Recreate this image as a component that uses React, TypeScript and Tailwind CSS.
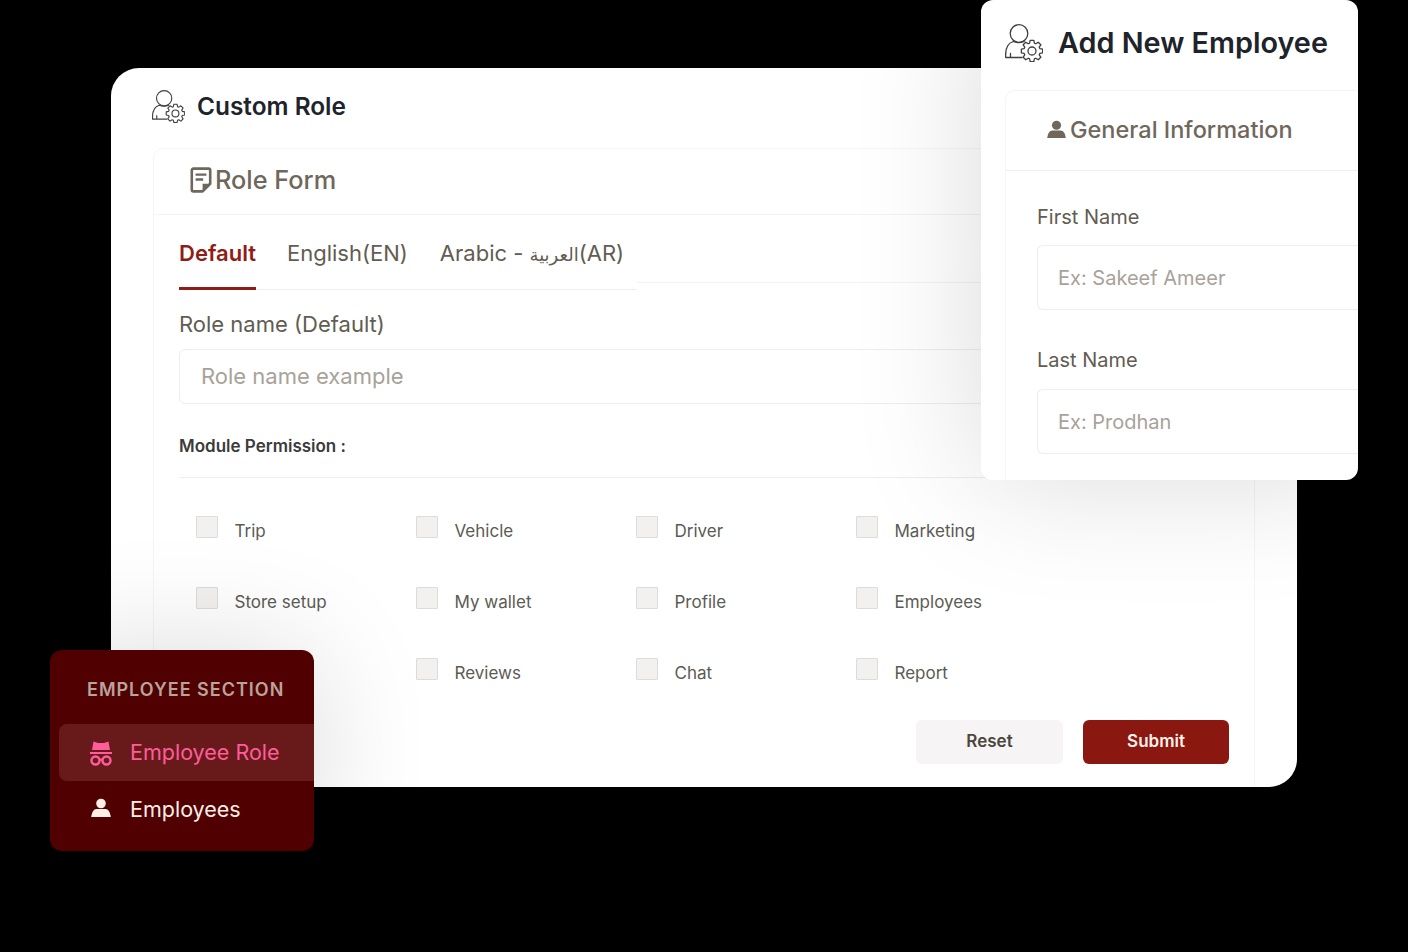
const gearPath = (() => {
  const pts: string[] = [];
  for (let i = 0; i < 8; i++) {
    const a = (i * Math.PI) / 4;
    [
      [8.2, -0.3],
      [10.8, -0.17],
      [10.8, 0.17],
      [8.2, 0.3],
    ].forEach(([r, d]) => {
      pts.push(`${(27 + r * Math.cos(a + d)).toFixed(2)} ${(27 + r * Math.sin(a + d)).toFixed(2)}`);
    });
  }
  return `M${pts.join("L")}Z`;
})();

const UserGearIcon = ({ className }: { className: string }) => (
  <svg viewBox="0 0 38 38" fill="none" stroke="#3f3f3f" strokeWidth="1.3" className={className}>
    <circle cx="14" cy="9.500" r="8.800" />
    <path d="M5.500 33.500v-4M.7 33.500c-.6-9 2.500-14.500 7.500-16 3.500 1.500 7.500 1.500 11 0M.7 33.500H17" strokeLinecap="round" />
    <path d={gearPath} strokeLinejoin="round" />
    <circle cx="27" cy="27" r="4" />
  </svg>
);

const NoteIcon = () => (
  <svg viewBox="0 0 20 24" className="h-[26px] w-[22px]" fill="none">
    <path
      d="M3 1.500h14a1.500 1.500 0 0 1 1.500 1.500v12.500l-7 7H3A1.500 1.500 0 0 1 1.500 21V3A1.500 1.500 0 0 1 3 1.500z"
      stroke="#6f675c"
      strokeWidth="2.400"
      strokeLinejoin="round"
    />
    <path d="M5 7h10M5 11.500h7" stroke="#6f675c" strokeWidth="2.200" />
    <path d="M11.500 22.500v-7h7z" fill="#6f675c" />
  </svg>
);

const PersonIcon = ({ className }: { className: string }) => (
  <svg viewBox="0 0 20 20" fill="currentColor" className={className}>
    <circle cx="10" cy="5.500" r="4.800" />
    <path d="M5.500 11h9c2.800 0 4.600 3 5.300 8H.2c.7-5 2.500-8 5.300-8z" />
  </svg>
);

const SpyIcon = () => (
  <svg viewBox="0 0 24 26" className="h-[26px] w-[24px] text-[#ff5c9a]" fill="none" stroke="currentColor">
    <path d="M4.500 1.500 9 3h6l4.500-1.500L21 10H3z" fill="currentColor" stroke="none" />
    <path d="M1 13h22" strokeWidth="2.200" />
    <circle cx="6.500" cy="20.500" r="4" strokeWidth="2.400" />
    <circle cx="17.500" cy="20.500" r="4" strokeWidth="2.400" />
    <path d="M10.500 20c1-.7 2-.7 3 0" strokeWidth="2" />
  </svg>
);

const modules = [
  "Trip",
  "Vehicle",
  "Driver",
  "Marketing",
  "Store setup",
  "My wallet",
  "Profile",
  "Employees",
  "",
  "Reviews",
  "Chat",
  "Report",
];

const ModuleCheck = ({ label }: { label: string }) => (
  <div className="flex h-[71px] items-start gap-[16.500px] text-[17px] leading-[30px] text-[#5b5b55]">
    <div className="h-[22px] w-[22px] shrink-0 rounded-[1px] border border-[#dcdcdc] bg-[#f3f1ef]" />
    <span>{label}</span>
  </div>
);

const RoleCard = () => (
  <div className="ml-[111px] flex h-[719px] w-[1186px] flex-col rounded-[28px] bg-white pl-[41px] pr-[42px]">
    <div className="flex h-[80px] shrink-0 items-center gap-[12px] pb-[4px]">
      <UserGearIcon className="h-[33px] w-[33px]" />
      <h1 className="text-[24.400px] font-semibold text-[#20232a]">Custom Role</h1>
    </div>
    <div className="ml-[1px] flex flex-1 flex-col rounded-t-[10px] border-x border-t border-[#f5f5f5]">
      <div className="flex h-[66px] shrink-0 items-center gap-[3px] border-b border-[#f3f3f3] pb-[3px] pl-[36px]">
        <NoteIcon />
        <h2 className="text-[25.300px] font-medium text-[#6f675c]">Role Form</h2>
      </div>
      <div className="flex flex-1 flex-col px-[25px]">
        <div className="flex shrink-0">
          <div className="flex h-[75px] w-[458px] gap-[32px] border-b border-[#eeeeee] text-[22px] leading-[76px] text-[#625c52]">
            <span className="h-[75px] border-b-[3px] border-[#8f1d16] font-semibold text-[#8f1d16]">Default</span>
            <span className="-ml-[1px]">English(EN)</span>
            <span>
              Arabic - <span className="text-[18px]">العربية</span>(AR)
            </span>
          </div>
          <div className="h-[68px] flex-1 border-b border-[#f3f3f3]" />
        </div>
        <div className="mt-[18px] text-[22px] leading-[32px] text-[#625c52]">Role name (Default)</div>
        <div className="mt-[9px] flex h-[55px] shrink-0 items-center rounded-[6px] border border-[#eeeeee] pl-[21px] text-[22px] text-[#a8a29a]">
          Role name example
        </div>
        <div className="mt-[31px] h-[43px] border-b border-[#eeeeee] text-[17px] font-semibold leading-[22px] text-[#3b3b3b]">
          Module Permission :
        </div>
        <div className="mt-[38px] grid grid-cols-[220px_220px_220px_220px] pl-[17px]">
          {modules.map((m, i) => (
            <ModuleCheck key={i} label={m} />
          ))}
        </div>
        <div className="mt-[-9px] flex justify-end gap-[20px]">
          <button className="h-[44px] w-[147px] rounded-[6px] bg-[#f6f4f4] text-[17px] font-semibold text-[#4b4740]">
            Reset
          </button>
          <button className="h-[44px] w-[146px] rounded-[6px] bg-[#8a1710] text-[17px] font-semibold text-[#fff2ec]">
            Submit
          </button>
        </div>
      </div>
    </div>
  </div>
);

const EmployeePanel = () => (
  <div className="absolute right-[50px] top-0 h-[480px] w-[377px] overflow-hidden rounded-[12px] bg-white pl-[24px] shadow-[0_0_130px_rgba(0,0,0,0.15)]">
    <div className="flex h-[90px] items-center gap-[15px] pb-[5px]">
      <UserGearIcon className="h-[38px] w-[38px]" />
      <h1 className="text-[28.800px] font-semibold text-[#20232a]">Add New Employee</h1>
    </div>
    <div className="h-[400px] rounded-tl-[10px] border-l border-t border-[#f5f5f5]">
      <div className="flex h-[80px] items-center gap-[4px] border-b border-[#efefef] pb-[2px] pl-[41px] text-[#6f675c]">
        <PersonIcon className="h-[19px] w-[19px]" />
        <h2 className="text-[23.500px] font-medium">General Information</h2>
      </div>
      <div className="pl-[31px]">
        <div className="mt-[31px] text-[20px] leading-[30px] text-[#625c52]">First Name</div>
        <div className="mt-[13px] flex h-[65px] items-center rounded-l-[6px] border-y border-l border-[#eeeeee] pl-[20px] text-[20px] text-[#a8a29a]">
          Ex: Sakeef Ameer
        </div>
        <div className="mt-[35px] text-[20px] leading-[30px] text-[#625c52]">Last Name</div>
        <div className="mt-[14px] flex h-[65px] items-center rounded-l-[6px] border-y border-l border-[#eeeeee] pl-[20px] text-[20px] text-[#a8a29a]">
          Ex: Prodhan
        </div>
      </div>
    </div>
  </div>
);

const SideMenu = () => (
  <div className="absolute left-[50px] top-[650px] h-[201px] w-[264px] overflow-hidden rounded-[12px] bg-[#500000] pl-[9px] shadow-[0_0_120px_rgba(0,0,0,0.14)]">
    <div className="pl-[28px] pt-[27px] text-[18px] font-semibold leading-[26px] tracking-[1px] text-[#b8a49b]">
      EMPLOYEE SECTION
    </div>
    <div className="mt-[21px] flex h-[57px] items-center gap-[17px] rounded-l-[8px] bg-[#681a1a] pl-[30px] text-[21.500px] text-[#ff5c9a]">
      <SpyIcon />
      Employee Role
    </div>
    <div className="flex h-[57px] items-center gap-[19px] pl-[32px] text-[21.500px] text-[#fdeee6]">
      <PersonIcon className="mb-[3px] h-[20px] w-[20px]" />
      Employees
    </div>
  </div>
);

export default function App() {
  return (
    <div className="relative h-[952px] w-[1408px] overflow-hidden bg-black pt-[68px] font-['Inter','DejaVu_Sans',sans-serif]">
      <RoleCard />
      <EmployeePanel />
      <SideMenu />
    </div>
  );
}
